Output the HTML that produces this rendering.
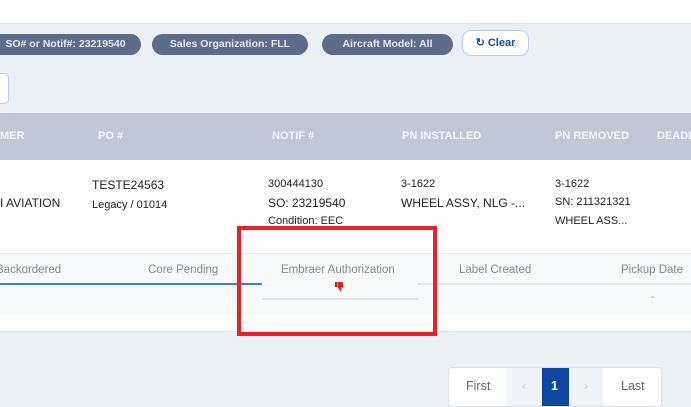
<!DOCTYPE html>
<html><head><style>
*{margin:0;padding:0;box-sizing:border-box}
body{width:691px;height:405px;overflow:hidden;background:#ebf0f5;font-family:"Liberation Sans",sans-serif;position:relative}
.a{position:absolute;white-space:nowrap}
.chip{position:absolute;top:34px;height:21px;border-radius:11px;background:#5f6b8a;color:#e6e9f0;font-size:10.5px;font-weight:bold;line-height:21px;text-align:center}
.h{position:absolute;top:130px;color:#f4f6fa;font-size:11px;font-weight:bold}
.t{font-size:12px;color:#222}
.s{font-size:11px;color:#222}
.tab{position:absolute;top:264px;font-size:11.5px;color:#888}
</style></head><body>
<div class="a" style="left:0;top:0;width:691px;height:24px;background:#fff;border-bottom:1px solid #dde3ea"></div>
<div class="chip" style="left:-10px;width:151px">SO# or Notif#: 23219540</div>
<div class="chip" style="left:152px;width:156px">Sales Organization: FLL</div>
<div class="chip" style="left:322px;width:131px">Aircraft Model: All</div>
<div class="a" style="left:462px;top:30px;width:67px;height:26px;border:1px solid #b8cdf0;border-radius:9px;background:#fff;color:#1c4aa0;font-size:11px;font-weight:bold;line-height:24px;text-align:center">&#x21bb; Clear</div>
<div class="a" style="left:-10px;top:73px;width:19px;height:31px;border:1px solid #b8cdf0;border-radius:5px;background:#fff"></div>
<div class="a" style="left:0;top:113px;width:691px;height:47px;background:#c0c8d8"></div>
<div class="h" style="left:0">MER</div><div class="h" style="left:98px">PO #</div><div class="h" style="left:272px">NOTIF #</div><div class="h" style="left:402px">PN INSTALLED</div><div class="h" style="left:555px">PN REMOVED</div><div class="h" style="left:657px">DEADL</div>
<div class="a" style="left:0;top:160px;width:691px;height:172px;background:#fff;border-bottom:1px solid #dde3ea"></div>
<div class="a t" style="left:0;top:196px">I AVIATION</div>
<div class="a t" style="left:92px;top:178px">TESTE24563</div>
<div class="a s" style="left:92px;top:199px">Legacy / 01014</div>
<div class="a s" style="left:268px;top:178px">300444130</div>
<div class="a t" style="left:268px;top:196px">SO: 23219540</div>
<div class="a s" style="left:268px;top:215px">Condition: EEC</div>
<div class="a s" style="left:401px;top:178px">3-1622</div>
<div class="a t" style="left:401px;top:196px">WHEEL ASSY, NLG -...</div>
<div class="a s" style="left:555px;top:178px">3-1622</div>
<div class="a s" style="left:555px;top:196px">SN: 211321321</div>
<div class="a s" style="left:555px;top:215px">WHEEL ASS...</div>
<div class="a" style="left:0;top:253px;width:691px;height:62px;background:#f8f9fa;border-top:1px solid #eceef1"></div>
<div class="tab" style="left:-4px">Backordered</div>
<div class="tab" style="left:148px">Core Pending</div>
<div class="tab" style="left:281px">Embraer Authorization</div>
<div class="tab" style="left:459px">Label Created</div>
<div class="tab" style="left:621px">Pickup Date</div>
<div class="a" style="left:0;top:283px;width:262px;height:2px;background:#3a7de0"></div>
<div class="a" style="left:418px;top:283px;width:273px;height:2px;background:#e4e6ea"></div>
<div class="a" style="left:262px;top:298px;width:157px;height:2px;background:#e4e6ea"></div>
<svg class="a" style="left:335px;top:282px" width="10" height="10" viewBox="0 0 10 10"><rect x="0" y="0" width="2.5" height="5" fill="#e02020"/><path d="M3 0h4.5l1 4.5-0.5 1H6l0.5 3-1 1L3 5.5z" fill="#e02020"/></svg>
<div class="a" style="left:651px;top:292px;font-size:10px;color:#888">-</div>
<div class="a" style="left:237px;top:226px;width:200px;height:110px;border:4px solid #e8202a"></div>
<div class="a" style="left:448px;top:367px;width:214px;height:40px;border:1px solid #dde1e6;border-radius:4px;background:#fff;overflow:hidden">
<div class="a" style="left:58px;top:0;width:96px;height:40px;background:#f0f3f7"></div>
<div class="a" style="left:93px;top:0;width:27px;height:40px;background:#0e47a1"></div>
<div class="a" style="left:17px;top:11px;font-size:12.5px;color:#666">First</div>
<div class="a" style="left:73px;top:11px;font-size:12px;color:#ccc">&#8249;</div>
<div class="a" style="left:102px;top:11px;font-size:12.5px;color:#fff;font-weight:bold">1</div>
<div class="a" style="left:135px;top:11px;font-size:12px;color:#ccc">&#8250;</div>
<div class="a" style="left:172px;top:11px;font-size:12.5px;color:#666">Last</div>
</div>
</body></html>
